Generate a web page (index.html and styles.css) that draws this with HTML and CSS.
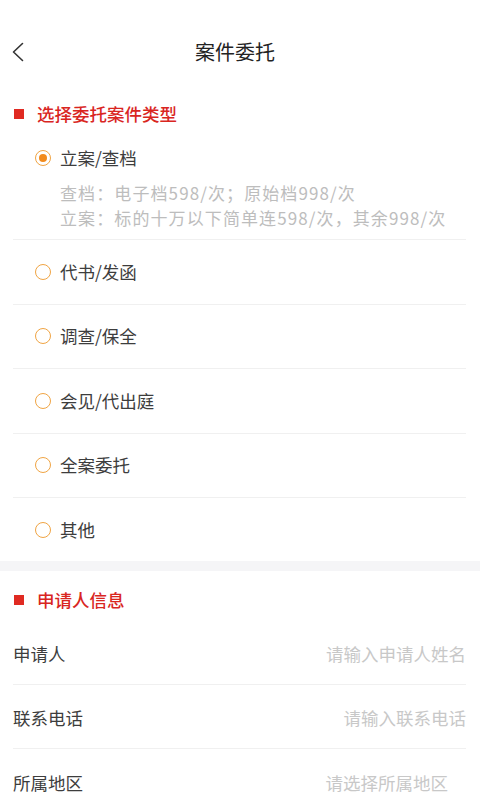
FILE: index.html
```html
<!DOCTYPE html>
<html lang="zh-CN">
<head>
<meta charset="utf-8">
<title>案件委托</title>
<link rel="stylesheet" href="styles.css">
</head>
<body>
<div class="page">
  <header class="nav">
    <span class="back">
      <svg width="14" height="20" viewBox="0 0 14 20"><path d="M11.5 1.5 L2.5 10 L11.5 18.5" fill="none" stroke="#333" stroke-width="1.6" stroke-linecap="round" stroke-linejoin="round"/></svg>
    </span>
    <h1 class="title">案件委托</h1>
  </header>

  <section class="section">
    <div class="sec-head first"><span class="mark"></span><span class="sec-title">选择委托案件类型</span></div>
    <ul class="options">
      <li class="opt opt-first">
        <div class="opt-line"><span class="radio checked"></span><span class="opt-label">立案/查档</span></div>
        <div class="desc">
          <p>查档：电子档598/次；原始档998/次</p>
          <p>立案：标的十万以下简单连598/次，其余998/次</p>
        </div>
      </li>
      <li class="opt"><div class="opt-line"><span class="radio"></span><span class="opt-label">代书/发函</span></div></li>
      <li class="opt"><div class="opt-line"><span class="radio"></span><span class="opt-label">调查/保全</span></div></li>
      <li class="opt"><div class="opt-line"><span class="radio"></span><span class="opt-label">会见/代出庭</span></div></li>
      <li class="opt"><div class="opt-line"><span class="radio"></span><span class="opt-label">全案委托</span></div></li>
      <li class="opt opt-last"><div class="opt-line"><span class="radio"></span><span class="opt-label">其他</span></div></li>
    </ul>
  </section>

  <div class="band"></div>

  <section class="section">
    <div class="sec-head second"><span class="mark"></span><span class="sec-title">申请人信息</span></div>
    <div class="field"><span class="f-label">申请人</span><span class="f-ph">请输入申请人姓名</span></div>
    <div class="field"><span class="f-label">联系电话</span><span class="f-ph">请输入联系电话</span></div>
    <div class="field last"><span class="f-label">所属地区</span><span class="f-ph select">请选择所属地区</span></div>
  </section>
</div>
</body>
</html>
```

FILE: styles.css
```css
* { box-sizing: border-box; }
html, body { margin: 0; padding: 0; background: #fff; }
body {
  font-family: "Noto Sans CJK SC", "Noto Sans", sans-serif;
  color: #3d3d3d;
  width: 480px;
  height: 800px;
  overflow: hidden;
}
.page { width: 480px; }

.nav {
  margin-top: 20px;
  height: 64px;
  display: flex;
  align-items: center;
  justify-content: center;
  position: relative;
}
.back {
  position: absolute;
  left: 11px;
  top: 22px;
  width: 14px;
  height: 20px;
  display: flex;
}
.title {
  margin: 0;
  font-size: 20px;
  font-weight: 400;
  color: #222;
  line-height: 28px;
  padding-right: 10px;
}

.sec-head {
  display: flex;
  align-items: center;
  padding-left: 14px;
}
.sec-head.first { padding-top: 19px; padding-bottom: 19px; }
.sec-head.second { padding-top: 18px; padding-bottom: 10px; }
.mark {
  width: 10px;
  height: 10px;
  background: #e02a22;
  margin-right: 13px;
}
.sec-title {
  font-size: 17.5px;
  line-height: 22px;
  color: #d9261f;
  font-weight: 500;
}

.options { list-style: none; margin: 0; padding: 0; }
.opt {
  margin: 0 14px 0 13px;
  height: 64.5px;
  border-bottom: 1px solid #f0f0f0;
  display: flex;
  flex-direction: column;
  justify-content: center;
}
.opt-first {
  height: auto;
  display: block;
  padding-bottom: 9px;
}
.opt-last { border-bottom: none; height: 63px; }
.opt-line {
  display: flex;
  align-items: center;
  height: 28px;
  padding-left: 22px;
}
.radio {
  width: 16px;
  height: 16px;
  border-radius: 50%;
  border: 1.8px solid #f0a443;
  margin-right: 9px;
  display: flex;
  align-items: center;
  justify-content: center;
  flex: none;
}
.radio.checked::after {
  content: "";
  width: 8px;
  height: 8px;
  border-radius: 50%;
  background: #f28b1d;
}
.opt-label {
  font-size: 17.5px;
  line-height: 28px;
  color: #3d3d3d;
}
.desc { padding-left: 47px; margin-top: 8px; }
.desc p {
  margin: 0;
  font-size: 17px;
  line-height: 25px;
  color: #bdbdbd;
  white-space: nowrap;
  letter-spacing: 1.1px;
}

.band { height: 10px; background: #f5f5f7; }

.field {
  margin: 0 14px 0 13px;
  height: 64px;
  border-bottom: 1px solid #f0f0f0;
  display: flex;
  align-items: center;
  justify-content: space-between;
  padding-top: 2px;
}
.field.last { border-bottom: none; }
.f-label { font-size: 17.5px; color: #3d3d3d; }
.f-ph { font-size: 17.5px; color: #c8c8c8; }
.f-ph.select { padding-right: 18px; }
```
